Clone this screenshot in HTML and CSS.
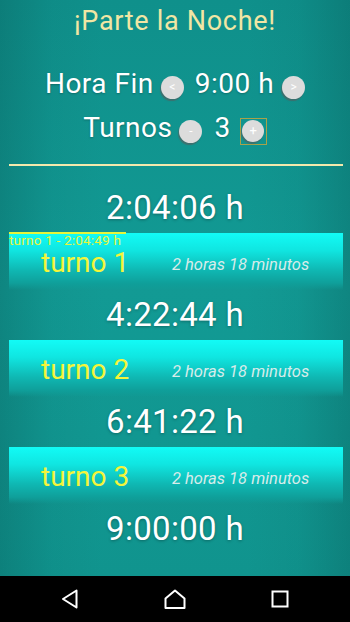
FILE: index.html
```html
<!DOCTYPE html>
<html lang="es">
<head>
<meta charset="utf-8">
<link rel="stylesheet" href="styles.css">
</head>
<body>
<div class="screen">
  <main class="app">
    <h1 class="title">¡Parte la Noche!</h1>
    <div class="row row-hora">
      <span class="label">Hora Fin</span>
      <span class="btn">&lt;</span>
      <span class="value">9:00 h</span>
      <span class="btn">&gt;</span>
    </div>
    <div class="row row-turnos">
      <span class="label">Turnos</span>
      <span class="btn">-</span>
      <span class="value">3</span>
      <span class="btn-box"><span class="btn">+</span></span>
    </div>
    <div class="divider"></div>

    <div class="time">2:04:06 h</div>
    <div class="band band-first">
      <div class="progress"></div>
      <div class="tip">turno 1 - 2:04:49 h</div>
      <span class="turno">turno 1</span>
      <span class="dur">2 horas 18 minutos</span>
    </div>
    <div class="time">4:22:44 h</div>
    <div class="band">
      <span class="turno">turno 2</span>
      <span class="dur">2 horas 18 minutos</span>
    </div>
    <div class="time">6:41:22 h</div>
    <div class="band">
      <span class="turno">turno 3</span>
      <span class="dur">2 horas 18 minutos</span>
    </div>
    <div class="time">9:00:00 h</div>
  </main>
  <nav class="navbar">
    <svg class="nav-icon" width="20" height="22" viewBox="0 0 20 22"><path d="M16.5 2.5 L3 11 L16.5 19.5 Z" fill="none" stroke="#fff" stroke-width="2" stroke-linejoin="round"/></svg>
    <svg class="nav-icon" width="24" height="22" viewBox="0 0 24 22"><path d="M2.5 20 L2.5 10.5 L12 2.5 L21.5 10.5 L21.5 20 Z" fill="none" stroke="#fff" stroke-width="2" stroke-linejoin="round"/></svg>
    <svg class="nav-icon" width="20" height="22" viewBox="0 0 20 22"><rect x="2.5" y="3.5" width="15" height="15" fill="none" stroke="#fff" stroke-width="2"/></svg>
  </nav>
</div>
</body>
</html>
```

FILE: styles.css
```css
* { box-sizing: border-box; }
html, body { margin: 0; padding: 0; }
body {
  width: 350px;
  height: 622px;
  overflow: hidden;
  font-family: Roboto, "Liberation Sans", sans-serif;
  background: #000;
}
.screen {
  width: 350px;
  height: 622px;
  display: flex;
  flex-direction: column;
}
.app {
  height: 576px;
  background:
    linear-gradient(to right, rgba(0,40,40,0.18) 0%, rgba(0,40,40,0.04) 15%, rgba(0,40,40,0) 30%, rgba(0,40,40,0) 70%, rgba(0,40,40,0.04) 85%, rgba(0,40,40,0.18) 100%),
    linear-gradient(to bottom, #0f908b 0%, #129a94 50%, #10948e 100%);
  display: flex;
  flex-direction: column;
  align-items: stretch;
}
.title {
  margin: 0;
  height: 44px;
  line-height: 42px;
  text-align: center;
  font-weight: 400;
  font-size: 27px;
  letter-spacing: 0.7px;
  color: #f1e6a4;
}
.row {
  display: flex;
  align-items: center;
  justify-content: center;
  color: #fff;
  font-size: 28px;
  letter-spacing: 0.5px;
  text-shadow: 0 1px 2px rgba(0,0,0,0.25);
}
.row-hora { margin-top: 17px; height: 44px; }
.row-turnos { height: 44px; }
.label { margin-right: 7px; }
.value { margin: 0 8px 0 11px; }
.row-turnos .value { margin: 0 9px 0 12px; }
.btn {
  width: 23px;
  height: 23px;
  border-radius: 50%;
  background: #dcdcdc;
  box-shadow: -1px 2px 1px rgba(90,90,90,0.6);
  color: #fff;
  font-size: 12px;
  line-height: 23px;
  letter-spacing: 0;
  text-align: center;
  text-shadow: none;
  margin-top: 8px;
  flex: none;
}
.btn-box {
  width: 27px;
  height: 27px;
  border: 1px solid #a9a24a;
  display: flex;
  align-items: center;
  justify-content: center;
  margin-top: 8px;
}
.btn-box .btn { margin-top: 0; width: 22px; height: 22px; line-height: 22px; font-size: 13px; }
.divider {
  margin: 15px 7px 0 9px;
  height: 2px;
  background: #f3e9ad;
}
.time {
  height: 50px;
  line-height: 50px;
  text-align: center;
  color: #fff;
  font-size: 33px;
  letter-spacing: 0.3px;
  text-shadow: 0 1px 3px rgba(0,0,0,0.3);
}
.divider + .time { margin-top: 17px; }
.band {
  position: relative;
  margin: 0 7px 0 9px;
  height: 57px;
  background: linear-gradient(to bottom, #12fbf6 0%, #10e6e1 30%, #0fb8b3 65%, #0f9f9a 88%, rgba(16,150,144,0) 100%);
  display: grid;
  grid-template-columns: 163px 1fr;
  align-items: start;
}
.turno {
  padding-left: 32px;
  font-size: 28px;
  color: #f5f53a;
  padding-top: 16px;
  line-height: 27px;
}
.dur {
  font-size: 16.5px;
  font-style: italic;
  color: #d7ecea;
  padding-top: 22px;
  white-space: nowrap;
}
.progress {
  position: absolute;
  left: 0;
  top: -1px;
  width: 117px;
  height: 2px;
  background: #e6f53a;
}
.tip {
  position: absolute;
  left: 0;
  top: 1px;
  font-size: 13.5px;
  letter-spacing: 0.2px;
  color: #e8f53c;
  white-space: nowrap;
  line-height: 12px;
}
.navbar {
  height: 46px;
  background: #000;
  display: flex;
  align-items: center;
  justify-content: center;
  gap: 83px;
}
.nav-icon { display: block; }
```
